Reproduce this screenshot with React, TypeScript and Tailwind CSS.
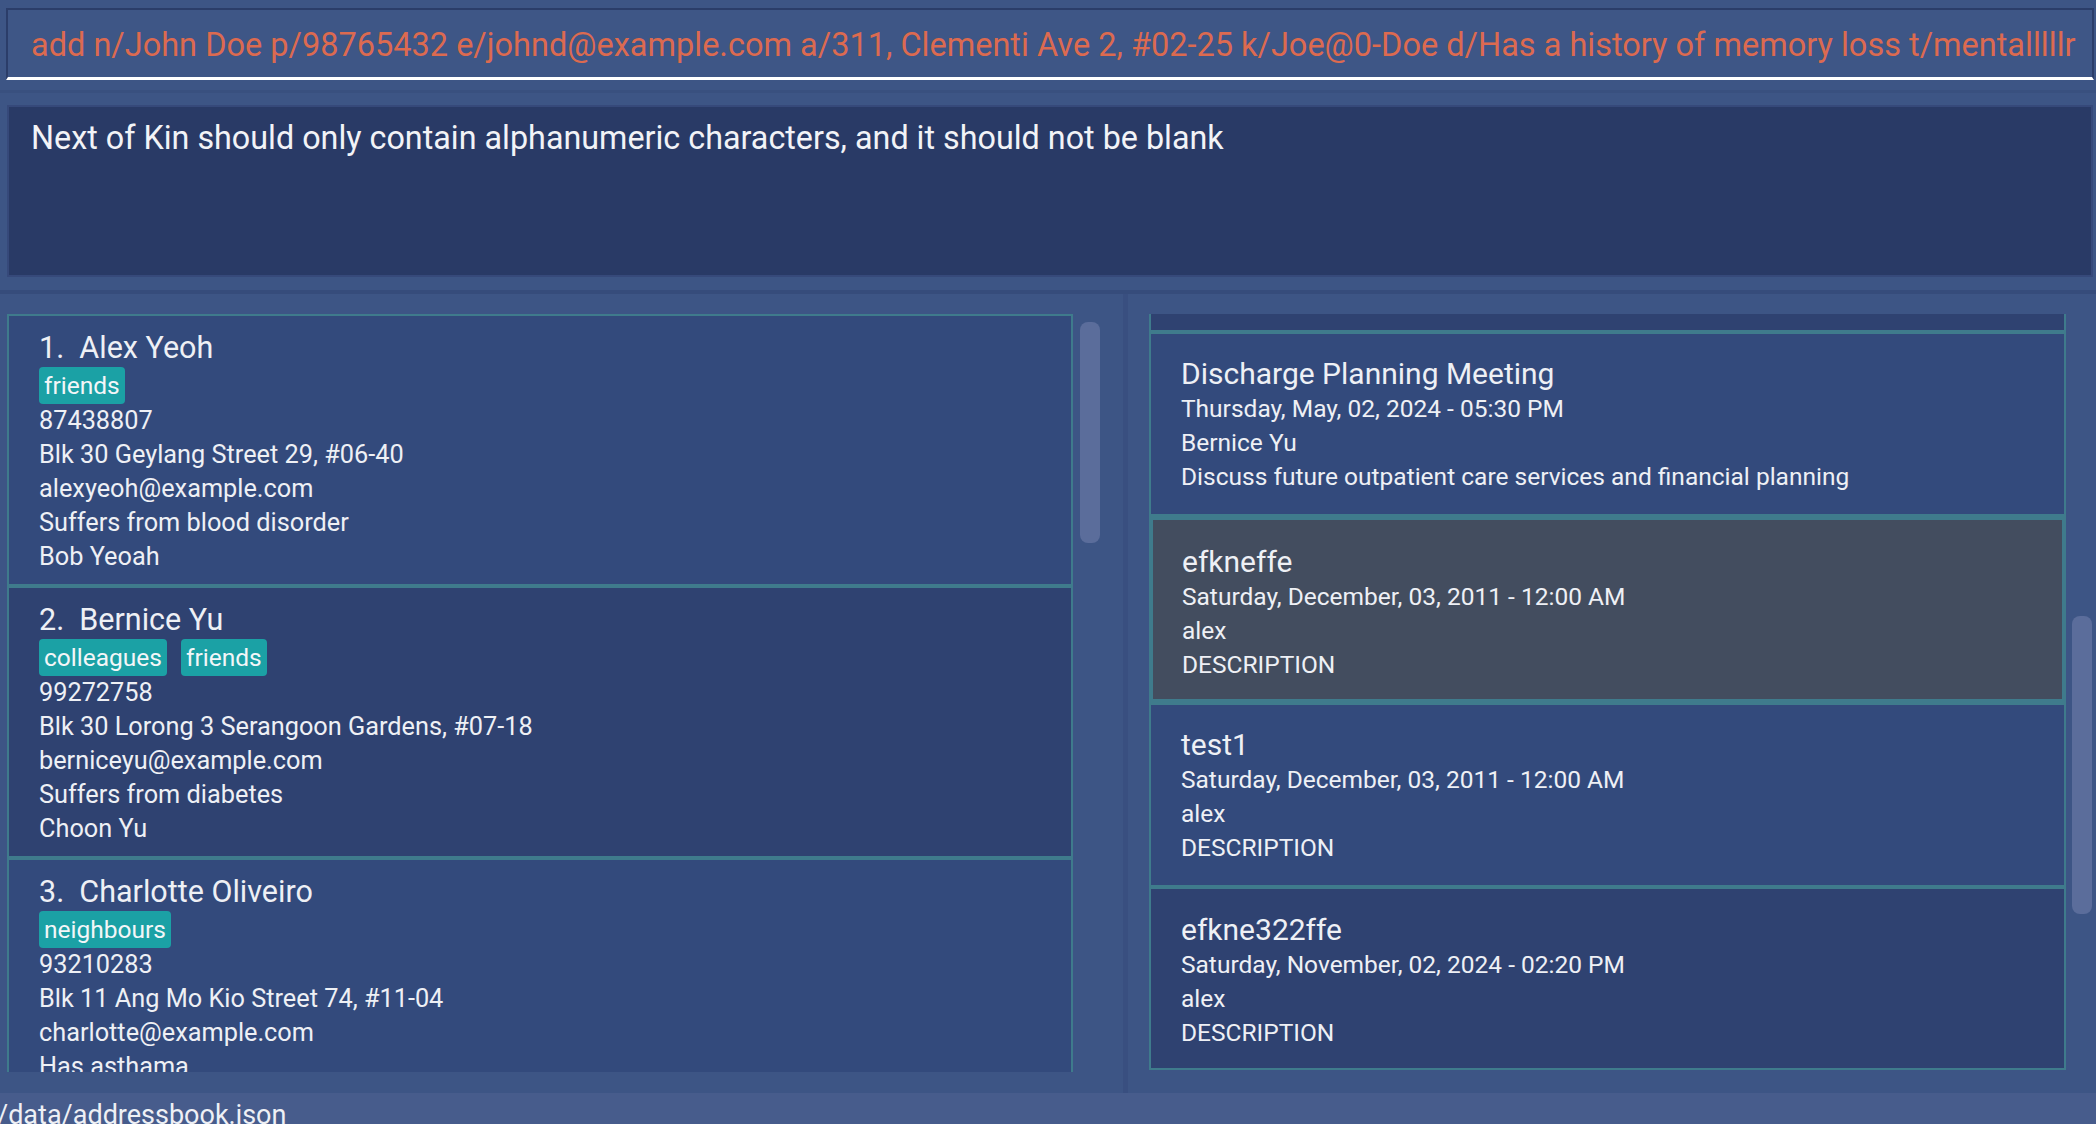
import React from "react";

type Person = {
  idx: number;
  name: string;
  tags: string[];
  phone: string;
  address: string;
  email: string;
  medical: string;
  kin: string;
};

const people: Person[] = [
  {
    idx: 1,
    name: "Alex Yeoh",
    tags: ["friends"],
    phone: "87438807",
    address: "Blk 30 Geylang Street 29, #06-40",
    email: "alexyeoh@example.com",
    medical: "Suffers from blood disorder",
    kin: "Bob Yeoah",
  },
  {
    idx: 2,
    name: "Bernice Yu",
    tags: ["colleagues", "friends"],
    phone: "99272758",
    address: "Blk 30 Lorong 3 Serangoon Gardens, #07-18",
    email: "berniceyu@example.com",
    medical: "Suffers from diabetes",
    kin: "Choon Yu",
  },
  {
    idx: 3,
    name: "Charlotte Oliveiro",
    tags: ["neighbours"],
    phone: "93210283",
    address: "Blk 11 Ang Mo Kio Street 74, #11-04",
    email: "charlotte@example.com",
    medical: "Has asthama",
    kin: "Jane Oliveiro",
  },
];

type Appt = {
  title: string;
  date: string;
  who: string;
  desc: string;
  variant: "light" | "dark" | "selected";
};

const appts: Appt[] = [
  {
    title: "Discharge Planning Meeting",
    date: "Thursday, May, 02, 2024 - 05:30 PM",
    who: "Bernice Yu",
    desc: "Discuss future outpatient care services and financial planning",
    variant: "light",
  },
  {
    title: "efkneffe",
    date: "Saturday, December, 03, 2011 - 12:00 AM",
    who: "alex",
    desc: "DESCRIPTION",
    variant: "selected",
  },
  {
    title: "test1",
    date: "Saturday, December, 03, 2011 - 12:00 AM",
    who: "alex",
    desc: "DESCRIPTION",
    variant: "light",
  },
  {
    title: "efkne322ffe",
    date: "Saturday, November, 02, 2024 - 02:20 PM",
    who: "alex",
    desc: "DESCRIPTION",
    variant: "dark",
  },
];

function PersonCard({ p }: { p: Person }) {
  const bg = p.idx % 2 === 1 ? "bg-[#334a7c]" : "bg-[#2f4271]";
  return (
    <div className={`${bg} border-2 border-[#3f7b8c] shrink-0 h-[272px] pl-[30px] pt-[14px] text-[#eef0f5]`}>
      <div className="text-[30.5px] leading-[36px] whitespace-nowrap">
        {p.idx}.&nbsp; {p.name}
      </div>
      <div className="flex gap-[14px] h-[38px] items-center">
        {p.tags.map((t) => (
          <span
            key={t}
            className="bg-[#1ba1a5] rounded-[4px] px-[5px] h-[37px] leading-[37px] text-[24.5px] text-[#f3f6f8]"
          >
            {t}
          </span>
        ))}
      </div>
      <div className="text-[25.3px] leading-[34px]">
        <div>{p.phone}</div>
        <div>{p.address}</div>
        <div>{p.email}</div>
        <div>{p.medical}</div>
        <div>{p.kin}</div>
      </div>
    </div>
  );
}

function ApptCard({ a }: { a: Appt }) {
  const cls =
    a.variant === "selected"
      ? "bg-[#434d5f] border-4 pl-[29px] pt-[24px] pb-[17px]"
      : a.variant === "light"
      ? "bg-[#334a7c] border-2 pl-[30px] pt-[22px] pb-[20px]"
      : "bg-[#2f4271] border-2 pl-[30px] pt-[23px] pb-[18px]";
  return (
    <div className={`${cls} border-[#3f7b8c] shrink-0 text-[#eef0f5]`}>
      <div className="text-[30px] leading-[36px] whitespace-nowrap">{a.title}</div>
      <div className="text-[24.5px] leading-[34px]">
        <div>{a.date}</div>
        <div>{a.who}</div>
        <div>{a.desc}</div>
      </div>
    </div>
  );
}

export default function App() {
  return (
    <div
      className="w-[2096px] h-[1124px] bg-[#3d5585] flex flex-col overflow-hidden"
      style={{ fontFamily: "Roboto, 'Liberation Sans', sans-serif" }}
    >
      {/* Command box */}
      <div className="pt-[8px] pl-[6px] pr-[2px] h-[90px] shrink-0">
        <div className="h-[72px] border-t-2 border-x-2 border-[#2b3d69] border-b-[3px] border-b-white bg-[#3e5686] pl-[23px] pr-[4px] flex items-center overflow-hidden">
          <div className="text-[32.5px] text-[#dc6a50] whitespace-nowrap leading-none pt-[3px]">
            add n/John Doe p/98765432 e/johnd@example.com a/311, Clementi Ave 2, #02-25 k/Joe@0-Doe d/Has a history of memory loss t/mentalllllr
          </div>
        </div>
      </div>

      {/* Result display */}
      <div className="h-[204px] shrink-0 border-t-[3px] border-[#39507f] border-b-4 border-b-[#364c7b] pt-[12px] pl-[7px] pr-[3px] pb-[13px]">
        <div className="h-full bg-[#293a66] border-2 border-[#36497a] pl-[22px] pt-[12px]">
          <div className="text-[32.3px] leading-[38px] text-[#f2f3f7] whitespace-nowrap">
            Next of Kin should only contain alphanumeric characters, and it should not be blank
          </div>
        </div>
      </div>

      {/* Main area */}
      <div className="flex-1 flex min-h-0">
        {/* Left panel: persons */}
        <div className="w-[1123px] shrink-0 flex pt-[20px] pl-[7px] pb-[21px]">
          <div className="w-[1066px] flex flex-col overflow-hidden">
            {people.map((p) => (
              <PersonCard key={p.idx} p={p} />
            ))}
          </div>
          <div className="flex-1 pl-[7px] pr-[23px] pt-[8px]">
            <div className="w-[20px] h-[221px] rounded-[8px] bg-[#5b6d9b]" />
          </div>
        </div>

        {/* divider */}
        <div className="w-[5px] shrink-0 bg-[#394f80]" />

        {/* Right panel: appointments */}
        <div className="flex-1 flex pt-[20px] pl-[21px] pb-[21px]">
          <div className="w-[917px] flex flex-col overflow-hidden">
            <div className="h-[18px] shrink-0 bg-[#2f4271] border-x-2 border-b-2 border-[#3f7b8c]" />
            {appts.map((a, i) => (
              <ApptCard key={i} a={a} />
            ))}
          </div>
          <div className="flex-1 pl-[6px] pr-[4px] pt-[302px]">
            <div className="w-[20px] h-[298px] rounded-[8px] bg-[#5b6d9b]" />
          </div>
        </div>
      </div>

      {/* Status bar */}
      <div className="h-[31px] shrink-0 bg-[#475c8c] overflow-hidden pt-[7px]">
        <div className="-ml-[3px] text-[27px] leading-[30px] text-[#eef0f5] whitespace-nowrap">
          /data/addressbook.json
        </div>
      </div>
    </div>
  );
}
